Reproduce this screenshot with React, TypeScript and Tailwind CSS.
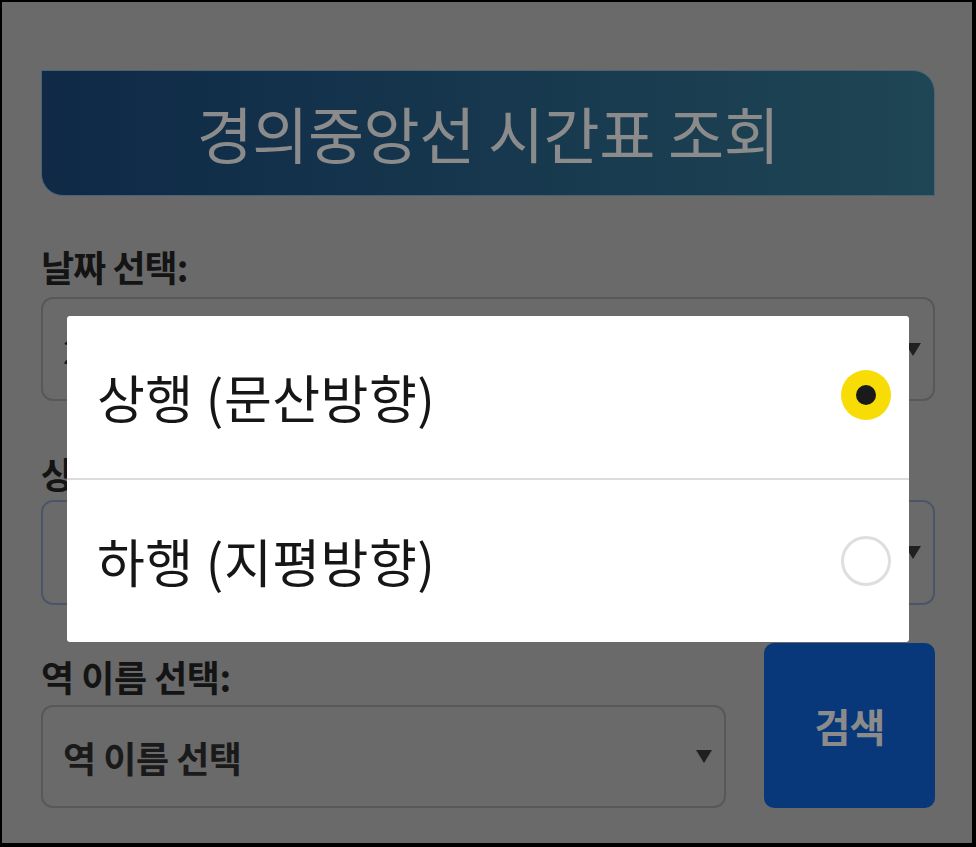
import React from "react";

const font = "font-['Noto_Sans_CJK_KR','Noto_Sans',sans-serif]";

function Caret() {
  return (
    <svg width="16" height="13" viewBox="0 0 16 13" className="shrink-0">
      <polygon points="0,0 16,0 8,13" fill="#202020" />
    </svg>
  );
}

function Radio({ checked }: { checked: boolean }) {
  if (checked) {
    return (
      <div className="w-[50px] h-[50px] rounded-full bg-[#f8dc06] flex items-center justify-center">
        <div className="w-[20px] h-[20px] rounded-full bg-[#1a1a1a]" />
      </div>
    );
  }
  return <div className="w-[50px] h-[50px] rounded-full border-[3px] border-[#dedede] bg-white" />;
}

export default function App() {
  return (
    <div
      className={`relative w-[976px] h-[847px] overflow-hidden bg-[#6a6a6a] border-l-2 border-t-2 border-r-4 border-b-4 border-black ${font}`}
    >
      <div className="pl-[39px] pr-[37px] pt-[68px] flex flex-col">
        <div className="h-[126px] rounded-tr-[22px] rounded-bl-[22px] bg-linear-to-r from-[#0f2947] to-[#1f4654] border border-[#4a6176] flex items-center justify-center">
          <span className="text-[61px] leading-none text-[#8b8b8b] tracking-[-0.5px] pb-[2px]">
            경의중앙선 시간표 조회
          </span>
        </div>

        <div className="mt-[50px] h-[40px] leading-[40px] text-[36px] font-bold text-[#141414] tracking-[-1px]">
          날짜 선택:
        </div>
        <div className="mt-[11px] h-[104px] rounded-xl border-2 border-[#585858] flex items-center justify-between pl-[20px] pr-[12px]">
          <span className="text-[34px] text-[#1a1a1a]">2024-06-15</span>
          <Caret />
        </div>

        <div className="mt-[52px] h-[40px] leading-[40px] text-[36px] font-bold text-[#141414] tracking-[-1px]">
          상행/하행 선택:
        </div>
        <div className="mt-[7px] h-[105px] rounded-xl border-2 border-[#4b5568] flex items-center justify-between pl-[20px] pr-[12px]">
          <span className="text-[34px] text-[#1a1a1a]">· 상행 (문산방향)</span>
          <Caret />
        </div>

        <div className="mt-[38px] flex items-start gap-[38px]">
          <div className="flex-1 flex flex-col pt-[13px]">
            <div className="h-[40px] leading-[40px] text-[36px] font-bold text-[#141414] tracking-[-0.5px]">
              역 이름 선택:
            </div>
            <div className="mt-[9px] h-[103px] rounded-xl border-2 border-[#585858] flex items-center justify-between pl-[20px] pr-[12px]">
              <span className="text-[36px] font-semibold text-[#1a1a1a] tracking-[-0.5px]">역 이름 선택</span>
              <Caret />
            </div>
          </div>
          <div className="w-[171px] h-[165px] rounded-[10px] bg-[#08387a] flex items-center justify-center">
            <span className="text-[39px] font-bold text-[#8b8b8b] tracking-[-1px]">검색</span>
          </div>
        </div>
      </div>

      <div className="absolute left-[65px] right-[63px] top-[314px] bg-white rounded-[3px] flex flex-col">
        <div className="h-[162px] flex items-center justify-between pl-[30px] pr-[18px]">
          <span className="text-[52px] text-[#161616] tracking-[0.5px]">상행 (문산방향)</span>
          <div className="-translate-y-[2px]">
            <Radio checked />
          </div>
        </div>
        <div className="h-[2px] bg-[#dcdcdc]" />
        <div className="h-[162px] flex items-center justify-between pl-[30px] pr-[18px]">
          <span className="text-[52px] text-[#161616] tracking-[0.5px]">하행 (지평방향)</span>
          <Radio checked={false} />
        </div>
      </div>
    </div>
  );
}
